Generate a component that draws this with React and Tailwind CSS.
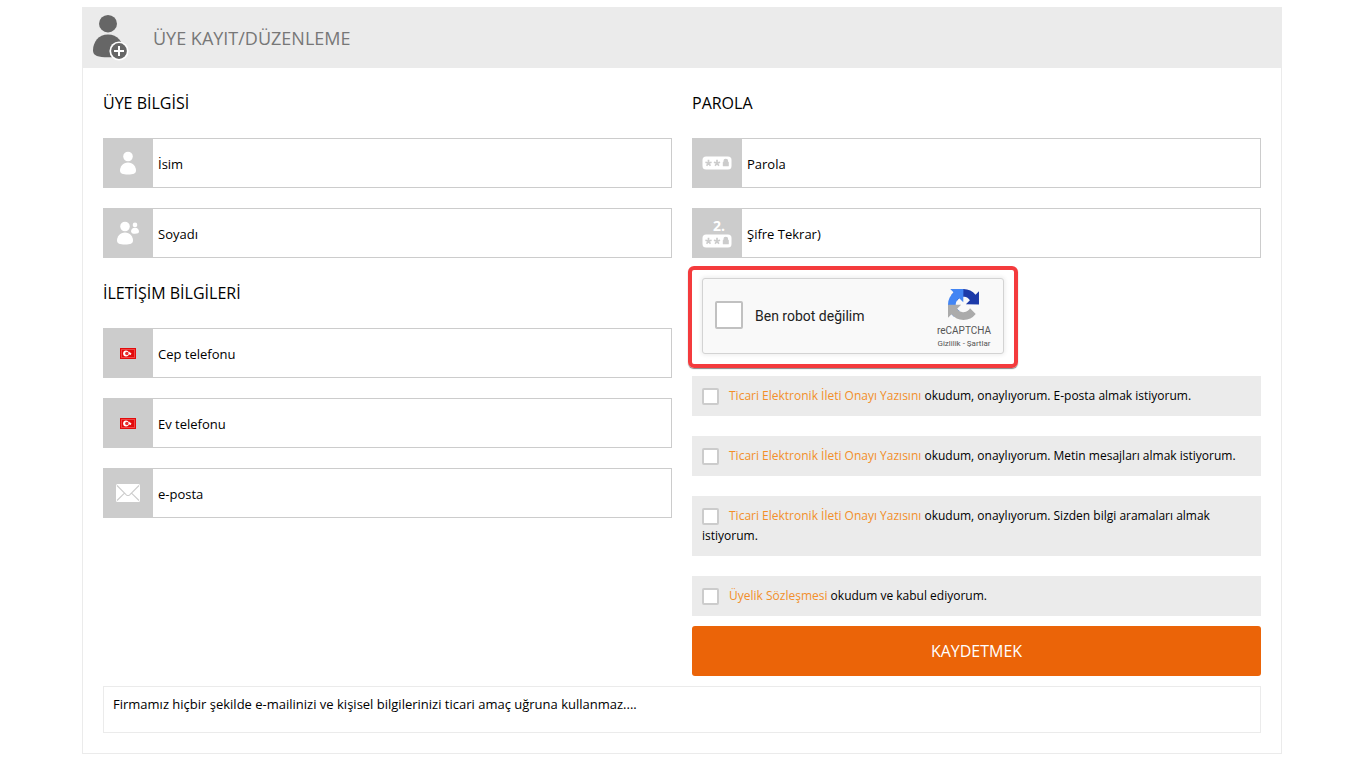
import React from "react";

function PersonIcon() {
  return (
    <svg width="16" height="24" viewBox="0 0 16 24" fill="#fff" aria-hidden="true">
      <circle cx="8" cy="5.500" r="4.800" />
      <path d="M8 11.600c5 0 8 4.200 8 8 0 3-2.600 4-8 4s-8-1-8-4c0-3.800 3-8 8-8z" />
    </svg>
  );
}

function PeopleIcon() {
  return (
    <svg width="24" height="24" viewBox="0 0 24 24" fill="#fff" aria-hidden="true">
      <circle cx="9" cy="5.500" r="4.800" />
      <path d="M9 11.600c5 0 8 4.200 8 8 0 3-2.600 4-8 4s-8-1-8-4c0-3.800 3-8 8-8z" />
      <circle cx="19" cy="3.900" r="2.300" />
      <path d="M19 6.800c2.800 0 4 2 4 3.700 0 1.600-1.300 2.200-4 2.200-1.200 0-2.200-.1-3-.5-.6-.8-.9-1.300-1-1.900.1-1.700 1.500-3.500 4-3.500z" />
    </svg>
  );
}

function PasswordIcon() {
  return (
    <svg width="30" height="14" viewBox="0 0 30 14" aria-hidden="true">
      <rect x="0.500" y="0.500" width="29" height="13" rx="3.500" fill="#fff" />
      <g stroke="#ccc" strokeWidth="1.700">
        <path d="M6.500 3.800V7M3.400 6.200l3.100.9 3.100-.9M4.600 9.700l1.900-2.600 1.900 2.600" fill="none" />
        <path d="M15 3.800V7M11.900 6.200l3.100.9 3.100-.9M13.100 9.700l1.900-2.600 1.900 2.600" fill="none" />
      </g>
      <rect x="20.800" y="6" width="6" height="4.300" rx="0.500" fill="#ccc" />
      <path d="M22 6V5.200a1.800 1.800 0 0 1 3.600 0V6" fill="#ccc" stroke="#ccc" strokeWidth="1.200" />
    </svg>
  );
}

function RepeatPasswordIcon() {
  return (
    <span className="flex flex-col items-center">
      <span className="pl-1 text-[14px] font-bold leading-4 text-white">2.</span>
      <PasswordIcon />
    </span>
  );
}

function FlagIcon() {
  return (
    <svg width="16" height="11" viewBox="0 0 16 11" aria-hidden="true">
      <rect width="16" height="11" fill="#e30a0a" />
      <rect x="1.500" y="1.500" width="13" height="8" fill="none" stroke="#f26161" strokeWidth="1" opacity="0.700" />
      <circle cx="6" cy="5.500" r="2.900" fill="#fff" />
      <circle cx="6.900" cy="5.500" r="1.800" fill="#ea3030" />
      <path d="M9.900 3.600l.5 1.300 1.400.1-1 .8.400 1.400-1.300-.8-1.500.5.400-1.400-.9-.9 1.400-.1z" fill="#fff" />
    </svg>
  );
}

function MailIcon() {
  return (
    <svg width="24" height="18" viewBox="0 0 24 18" aria-hidden="true">
      <rect width="24" height="18" rx="1.500" fill="#fff" />
      <path d="M1 1.500l9.300 9.300q1.700 1.500 3.400 0L23 1.500M1 16.500l7.500-7.300M23 16.500l-7.500-7.300" fill="none" stroke="#ccc" strokeWidth="1.100" />
    </svg>
  );
}

function AddMemberIcon() {
  return (
    <svg width="36" height="46" viewBox="0 0 36 46" aria-hidden="true">
      <g fill="#666">
        <ellipse cx="15" cy="8.700" rx="9" ry="8.700" />
        <path d="M15 19.500c9.500 0 15 7.300 15 15.500 0 6-5.500 7.300-15 7.300S0 41 0 35.500c0-8.500 5.500-16 15-16z" />
      </g>
      <circle cx="26" cy="36" r="9.600" fill="#fff" />
      <circle cx="26" cy="36" r="7.900" fill="#666" />
      <path d="M26 31v10M21 36h10" stroke="#fff" strokeWidth="2" />
    </svg>
  );
}

function RecaptchaLogo() {
  return (
    <svg width="31" height="31" viewBox="0 0 64 64" aria-hidden="true">
      <path fill="#1c3aa9" d="M64 31.955a33.300 33.300 0 0 0-.033-1.370V4.687l-7.160 7.160C50.948 4.674 42.033.093 32.050.093a31.920 31.920 0 0 0-25.241 12.300l11.736 11.860a15.550 15.550 0 0 1 4.754-5.334c2.050-1.600 4.952-2.906 8.968-2.906.485 0 .860.057 1.135.163 4.976.393 9.288 3.140 11.828 7.124l-8.307 8.307L64 31.953" />
      <path fill="#4285f4" d="M31.862.094a33.300 33.300 0 0 0-1.370.033H4.594l7.160 7.160C4.580 13.147 0 22.060 0 32.046a31.920 31.920 0 0 0 12.300 25.241L24.160 45.550a15.550 15.550 0 0 1-5.334-4.754c-1.600-2.050-2.906-4.952-2.906-8.968 0-.485.057-.860.163-1.135.393-4.976 3.140-9.288 7.124-11.828l8.307 8.307L31.860.095" />
      <path fill="#ababab" d="M.001 32.045a33.300 33.300 0 0 0 .033 1.370v25.898l7.160-7.160c5.860 7.173 14.774 11.754 24.760 11.754a31.920 31.920 0 0 0 25.241-12.300l-11.736-11.860a15.550 15.550 0 0 1-4.754 5.334c-2.050 1.600-4.952 2.906-8.968 2.906-.485 0-.860-.057-1.135-.163-4.976-.393-9.288-3.140-11.828-7.124l8.307-8.307c-10.522.040-22.400.066-27.295-.005" />
    </svg>
  );
}

function Field({ id, label, type = "text", icon }) {
  return (
    <div className="flex h-[50px] border border-[#ccc] bg-white">
      <label htmlFor={id} aria-label={label} className="flex w-[49px] shrink-0 items-center justify-center bg-[#ccc] pr-px">
        {icon}
      </label>
      <input
        id={id}
        type={type}
        placeholder={label}
        className="min-w-0 flex-1 px-[5px] pt-1 text-[13px] text-black outline-none placeholder:text-black placeholder:opacity-100"
      />
    </div>
  );
}

function SectionTitle({ children }) {
  return <h2 className="text-[16px] leading-[70px]">{children}</h2>;
}

function Consent({ id, link, children }) {
  return (
    <div className="bg-[#ebebeb] p-[10px] text-[12px] leading-5">
      <input
        id={id}
        type="checkbox"
        className="mr-[10px] inline-block size-[17px] appearance-none rounded-xs border-2 border-[#ccc] bg-white align-middle checked:bg-[#eb6408]"
      />
      <label htmlFor={id}>
        <a href="#" className="text-[#f28f2a]">{link}</a> {children}
      </label>
    </div>
  );
}

function Captcha() {
  return (
    <div className="mt-2 -ml-1 w-fit rounded-md border-4 border-[#f43b3d] px-[10px] pt-2 pb-[10px] shadow-[0_1px_1px_#888]">
      <div className="flex h-[76px] w-[302px] items-center rounded-[3px] border border-[#d3d3d3] bg-[#f9f9f9] px-3 font-[Roboto,sans-serif] shadow-[0_0_4px_1px_rgba(0,0,0,0.08)]">
        <input
          id="robot"
          type="checkbox"
          className="mb-0.5 size-7 appearance-none rounded-xs border-2 border-[#c1c1c1] bg-white checked:bg-[#4285f4]"
        />
        <label htmlFor="robot" className="flex-1 pl-3 text-[14px] text-[#222]">Ben robot değilim</label>
        <div className="flex flex-col items-center pt-1.5 text-[#555]">
          <RecaptchaLogo />
          <span className="pt-1 text-[10px] leading-[14px]">reCAPTCHA</span>
          <span className="text-[8px] leading-[12px]">
            <a href="#">Gizlilik</a> - <a href="#">Şartlar</a>
          </span>
        </div>
      </div>
    </div>
  );
}

export default function App() {
  return (
    <div className="bg-white py-[7px] pr-[3px] font-['Open_Sans',sans-serif] text-black">
      <main className="mx-auto max-w-[1200px] border border-[#ebebeb]">
        <header className="flex h-[60px] items-center gap-6 bg-[#ebebeb] pl-[10px]">
          <AddMemberIcon />
          <h1 className="text-[18px] text-[#777]">ÜYE KAYIT/DÜZENLEME</h1>
        </header>
        <form className="px-5 pb-5" onSubmit={(e) => e.preventDefault()}>
          <div className="grid grid-cols-2 gap-5">
            <div>
              <SectionTitle>ÜYE BİLGİSİ</SectionTitle>
              <div className="flex flex-col gap-5">
                <Field id="name" label="İsim" icon={<PersonIcon />} />
                <Field id="surname" label="Soyadı" icon={<PeopleIcon />} />
              </div>
              <SectionTitle>İLETİŞİM BİLGİLERİ</SectionTitle>
              <div className="flex flex-col gap-5">
                <Field id="mobile" type="tel" label="Cep telefonu" icon={<FlagIcon />} />
                <Field id="phone" type="tel" label="Ev telefonu" icon={<FlagIcon />} />
                <Field id="email" type="email" label="e-posta" icon={<MailIcon />} />
              </div>
            </div>
            <div>
              <SectionTitle>PAROLA</SectionTitle>
              <div className="flex flex-col gap-5">
                <Field id="password" type="password" label="Parola" icon={<PasswordIcon />} />
                <Field id="password2" type="password" label="Şifre Tekrar)" icon={<RepeatPasswordIcon />} />
              </div>
              <Captcha />
              <div className="mt-2 flex flex-col gap-5">
                <Consent id="c-email" link="Ticari Elektronik İleti Onayı Yazısını">
                  okudum, onaylıyorum. E-posta almak istiyorum.
                </Consent>
                <Consent id="c-sms" link="Ticari Elektronik İleti Onayı Yazısını">
                  okudum, onaylıyorum. Metin mesajları almak istiyorum.
                </Consent>
                <Consent id="c-call" link="Ticari Elektronik İleti Onayı Yazısını">
                  okudum, onaylıyorum. Sizden bilgi aramaları almak istiyorum.
                </Consent>
                <Consent id="c-terms" link="Üyelik Sözleşmesi">
                  okudum ve kabul ediyorum.
                </Consent>
              </div>
              <button type="submit" className="mt-[10px] h-[50px] w-full rounded-[3px] bg-[#eb6408] text-[16px] text-white">
                KAYDETMEK
              </button>
            </div>
          </div>
          <p className="mt-[10px] border border-[#ebebeb] px-[9px] pt-[7px] pb-[18px] text-[13px] leading-5">
            Firmamız hiçbir şekilde e-mailinizi ve kişisel bilgilerinizi ticari amaç uğruna kullanmaz....
          </p>
        </form>
      </main>
    </div>
  );
}
